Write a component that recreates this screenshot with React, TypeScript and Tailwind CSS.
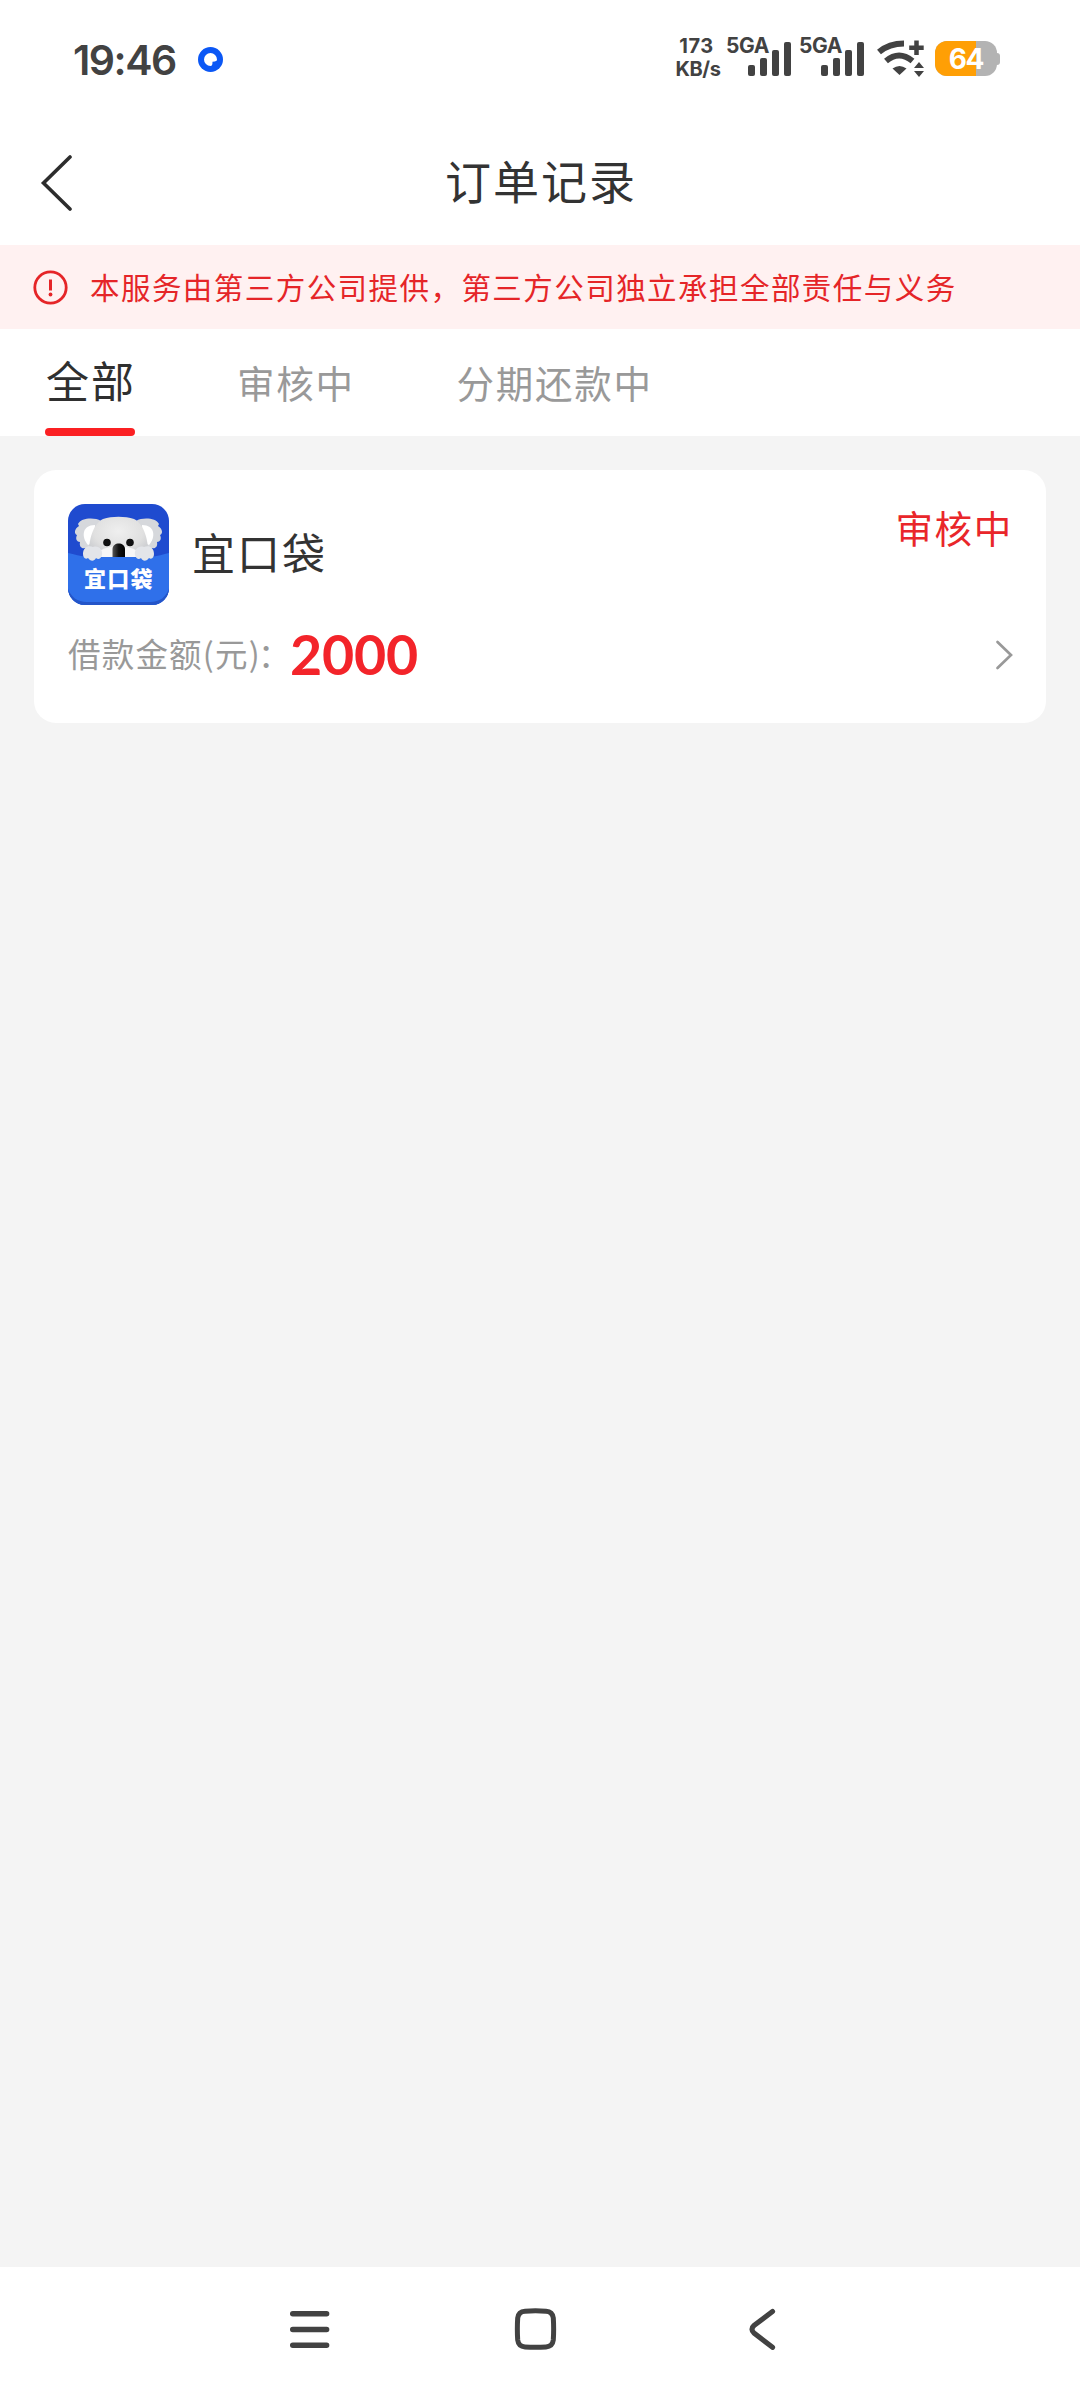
import type { ReactNode } from 'react'

interface Order {
  id: number
  name: string
  status: string
  amount: number
}

const TABS = ['全部', '审核中', '分期还款中']

const ORDERS: Order[] = [{ id: 1, name: '宜口袋', status: '审核中', amount: 2000 }]

function SignalBars() {
  return (
    <div className="relative h-[38px] w-[66px]">
      <span className="absolute left-0 top-0 text-[21px] leading-[16px] font-bold tracking-[-0.4px]">5GA</span>
      <svg className="absolute bottom-0 left-[22px]" width="43" height="34" viewBox="0 0 43 34" fill="currentColor">
        <rect x="0" y="23" width="7" height="11" rx="2" />
        <rect x="12" y="16" width="7" height="18" rx="2" />
        <rect x="24" y="8" width="7" height="26" rx="2" />
        <rect x="36" y="0" width="7" height="34" rx="2" />
      </svg>
    </div>
  )
}

function WifiIcon() {
  return (
    <svg width="48" height="38" viewBox="0 0 48 38" fill="none" stroke="currentColor">
      <path d="M2 13 Q12 4.500 27 4.500" strokeWidth="6" />
      <path d="M9 22 Q22 11 35.500 22" strokeWidth="6" />
      <path d="M15.500 29.500 Q22.500 24.500 29.500 29.500 L22.500 36 Z" fill="currentColor" stroke="none" />
      <path d="M39.500 1.500V16M32.200 8.700H46.700" strokeWidth="4.500" />
      <path d="M42 23 L47 29 H37 Z M42 38 L47 32 H37 Z" fill="currentColor" stroke="none" />
    </svg>
  )
}

function Battery({ level }: { level: number }) {
  return (
    <div className="flex items-center">
      <div className="relative flex h-[35px] w-[62px] items-center justify-center overflow-hidden rounded-[12px] bg-[#b3b3b3]">
        <div className="absolute inset-y-0 left-0 bg-[#ff9f05]" style={{ width: `${level + 2}%` }} />
        <span className="relative text-[28px] leading-none font-bold tracking-[-1.400px] text-white">{level}</span>
      </div>
      <div className="-ml-px h-3 w-[4px] rounded-r-[3px] bg-[#b3b3b3]" />
    </div>
  )
}

function StatusBar() {
  return (
    <div className="flex h-[121px] items-start text-[#424242] font-['Inter','Noto_Sans_CJK_SC',sans-serif]">
      <span className="ml-[73px] mt-[37px] w-[125px] text-[41px] leading-[46px] font-semibold tracking-[-1.500px]">19:46</span>
      <svg className="mt-[47px]" width="25" height="25" viewBox="0 0 25 25">
        <circle cx="12.500" cy="12.500" r="12.500" fill="#0b57f5" />
        <path d="M19 12.500 A6.500 6.500 0 1 0 12.500 19 C14 19 14.500 18 14.500 14.800 C18 14.500 19 14 19 12.500Z" fill="#fff" />
      </svg>
      <div className="ml-[450px] mt-[39px] flex w-[50px] flex-col items-center text-[20px] leading-[23px] font-bold">
        <span className="-mt-1 -ml-[3px] tracking-[0.500px]">173</span>
        <span className="tracking-[-0.400px]">KB/s</span>
      </div>
      <div className="ml-[3px] mt-[38px] flex">
        <SignalBars />
        <div className="w-[7px]" />
        <SignalBars />
      </div>
      <div className="ml-[12px] mt-[39px]">
        <WifiIcon />
      </div>
      <div className="ml-[10px] mt-[41px]">
        <Battery level={64} />
      </div>
    </div>
  )
}

function Header({ title }: { title: string }) {
  return (
    <header className="grid h-[124px] grid-cols-[1fr_auto_1fr] items-center">
      <svg className="ml-[40px]" width="32" height="58" viewBox="0 0 32 58" fill="none" stroke="#2d2d2d" strokeWidth="3.600" strokeLinecap="round">
        <path d="M30 3 L3.500 29 L30 55" />
      </svg>
      <h1 className="-mr-[2px] mb-[9px] text-[46px] leading-[60px] tracking-[2px] text-[#333]">{title}</h1>
    </header>
  )
}

function Notice({ children }: { children: ReactNode }) {
  return (
    <div className="flex h-[84px] items-center bg-[#fff1f1] pl-[33px] text-[#e52528]">
      <svg width="35" height="35" viewBox="0 0 35 35" fill="none" stroke="currentColor">
        <circle cx="17.500" cy="17.500" r="15.700" strokeWidth="2.800" />
        <path d="M17.500 9.500V20.500" strokeWidth="3" />
        <circle cx="17.500" cy="24.500" r="1.900" fill="currentColor" stroke="none" />
      </svg>
      <p className="mb-[3px] ml-[22px] text-[29.500px] leading-[40px] tracking-[1.450px] whitespace-nowrap">{children}</p>
    </div>
  )
}

function Tabs({ active }: { active: number }) {
  return (
    <nav className="flex h-[107px] bg-white pl-[45px] whitespace-nowrap">
      {TABS.map((tab, i) =>
        i === active ? (
          <div key={tab} className="mr-[102px] flex w-[90px] flex-col items-center justify-between text-[#2f2f2f]">
            <span className="mt-[18px] ml-[2px] text-[43px] leading-[64px] tracking-[2px]">{tab}</span>
            <div className="h-2 w-full rounded-full bg-[#fb2023]" />
          </div>
        ) : (
          <span key={tab} className="mr-[102px] mt-[21px] text-[37.500px] leading-[64px] tracking-[1.700px] text-[#999]">
            {tab}
          </span>
        ),
      )}
    </nav>
  )
}

function KoalaLogo() {
  return (
    <svg width="101" height="101" viewBox="0 0 101 101">
      <defs>
        <clipPath id="logo-clip">
          <rect width="101" height="101" rx="17" />
        </clipPath>
        <radialGradient id="fur" cx="0.5" cy="0.35" r="0.7">
          <stop offset="0" stopColor="#efefef" />
          <stop offset="0.6" stopColor="#e0e0e0" />
          <stop offset="1" stopColor="#c2c4c9" />
        </radialGradient>
        <linearGradient id="nose" x1="0" x2="1">
          <stop offset="0" stopColor="#555" />
          <stop offset="0.5" stopColor="#111" />
          <stop offset="1" stopColor="#000" />
        </linearGradient>
      </defs>
      <g clipPath="url(#logo-clip)">
        <rect width="101" height="101" fill="#1f4bcf" />
        {/* ears */}
        <path d="M33 17 C26 13 13 14 10 20 L11 22 C6 25 6 30 9 31 C7 35 9 38 12 38 C11 43 14 45 17 44 C19 48 26 48 30 46 L38 30Z" fill="#d6d8dc" />
        <path d="M68 17 C75 13 88 14 91 20 L90 22 C95 25 95 30 92 31 C94 35 92 38 89 38 C90 43 87 45 84 44 C82 48 75 48 71 46 L63 30Z" fill="#d6d8dc" />
        <path d="M27 21 C14 21 13 33 20 41 L26 38Z" fill="#fff" />
        <path d="M74 21 C87 21 88 33 81 41 L75 38Z" fill="#fff" />
        {/* head */}
        <path d="M21 54 C20 36 25 20 35 15 C44 12 57 12 66 15 C76 20 81 36 80 54Z" fill="url(#fur)" />
        <path d="M33 46 Q50 38 68 46 V54 H33Z" fill="#f7f7f7" />
        <circle cx="39" cy="38.500" r="3.800" fill="#111" />
        <circle cx="62" cy="38.500" r="3.800" fill="#111" />
        <path d="M44.500 54 V45 C44.500 37.500 57 37.500 57 45 V54Z" fill="url(#nose)" />
        {/* pocket */}
        <path d="M0 49 C10 51 14 53 24 53 H78 C88 53 92 51 101 49 V101 H0Z" fill="#2f70ea" />
        <path d="M0 85 C5 97 13 98 22 98 H79 C88 98 96 97 101 85 V101 H0Z" fill="#2455c8" />
        {/* paws */}
        <g fill="#e3e5e9">
          <path d="M15 50 C15 43 21 41 25 43 C31 41 35 46 34 51 C33 55 30 56 28 54 C26 58 22 57 20 54 C17 56 15 53 15 50Z" />
          <path d="M86 50 C86 43 80 41 76 43 C70 41 66 46 67 51 C68 55 71 56 73 54 C75 58 79 57 81 54 C84 56 86 53 86 50Z" />
        </g>
        <text
          x="16"
          y="83"
          fill="#fff"
          fontSize="22"
          fontWeight="900"
          letterSpacing="1.3"
          className="font-['Noto_Sans_CJK_SC',sans-serif]"
        >
          宜口袋
        </text>
      </g>
    </svg>
  )
}

function OrderCard({ order }: { order: Order }) {
  return (
    <article className="flex h-[253px] flex-col rounded-[22px] bg-white px-[34px] pt-[34px]">
      <div className="flex h-[101px] items-start">
        <KoalaLogo />
        <h2 className="ml-[23px] mt-[15px] text-[43px] leading-[64px] tracking-[2px] text-[#333]">{order.name}</h2>
        <span className="-mr-px ml-auto -mt-[4px] text-[37.500px] leading-[54px] tracking-[1.700px] text-[#e9262a]">{order.status}</span>
      </div>
      <div className="mt-[16px] flex h-[68px] items-center">
        <span className="mb-[3px] w-[222px] text-[32.500px] tracking-[1.200px] whitespace-nowrap text-[#999]">
          借款金额(元)<span className="-ml-[3px]">：</span>
        </span>
        <span className="mb-[3px] font-['Lato',sans-serif] text-[55.500px] leading-[68px] font-bold tracking-[-0.200px] text-[#f3242a]">
          {order.amount}
        </span>
        <svg className="-mr-px ml-auto" width="18" height="30" viewBox="0 0 18 30" fill="none" stroke="#999" strokeWidth="2.700" strokeLinecap="round">
          <path d="M2.500 2 L16 15 L2.500 28" />
        </svg>
      </div>
    </article>
  )
}

function NavigationBar() {
  return (
    <footer className="flex h-[133px] items-start bg-white pl-[290px] pt-[41px]">
      <svg width="40" height="42" viewBox="0 0 40 42" stroke="#424242" strokeWidth="5.500" strokeLinecap="round">
        <path d="M2.700 5.700H36.600M2.700 21.500H36.600M2.700 37.300H36.600" />
      </svg>
      <svg className="ml-[184px]" width="43" height="42" viewBox="0 0 43 42" fill="none" stroke="#424242" strokeWidth="5">
        <path d="M11 3.200 Q21.500 2.500 32 3.200 Q38.500 3.500 39.300 10 Q40 21 39.300 32 Q38.500 38.500 32 38.900 Q21.500 39.500 11 38.900 Q4.500 38.500 3.700 32 Q3 21 3.700 10 Q4.500 3.500 11 3.200Z" />
      </svg>
      <svg className="ml-[191px]" width="28" height="42" viewBox="0 0 28 42" fill="none" stroke="#424242" strokeWidth="5.200" strokeLinecap="round">
        <path d="M24.500 3.500 L6 17.500 Q2 21 6 25 L24.500 39.300" />
      </svg>
    </footer>
  )
}

export default function App() {
  return (
    <div className="flex h-[2400px] w-[1080px] flex-col bg-white font-['Noto_Sans_CJK_SC',sans-serif]">
      <StatusBar />
      <Header title="订单记录" />
      <Notice>本服务由第三方公司提供，第三方公司独立承担全部责任与义务</Notice>
      <Tabs active={0} />
      <main className="flex-1 bg-[#f4f4f4] px-[34px] pt-[34px]">
        {ORDERS.map(order => (
          <OrderCard key={order.id} order={order} />
        ))}
      </main>
      <NavigationBar />
    </div>
  )
}
